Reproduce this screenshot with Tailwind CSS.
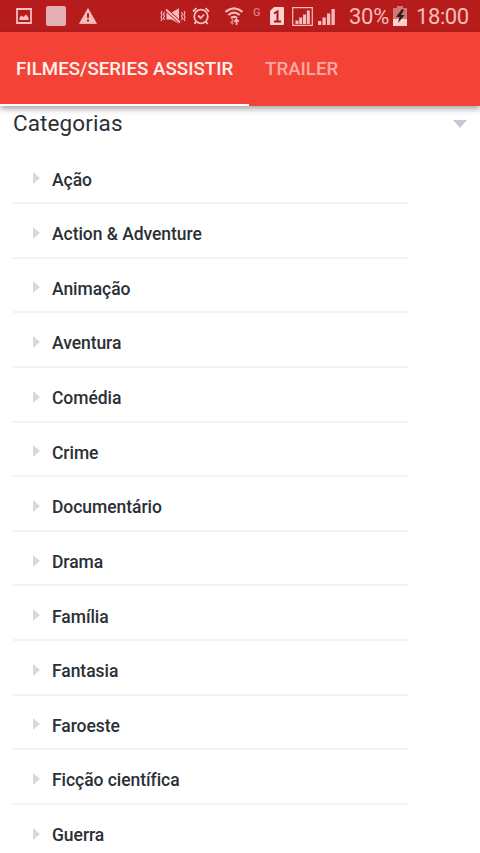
<!DOCTYPE html>
<html lang="pt">
<head>
<meta charset="utf-8">
<title>Categorias</title>
<script src="https://cdn.jsdelivr.net/npm/@tailwindcss/browser@4"></script>
</head>
<body class="bg-white w-[480px] h-[853px] overflow-hidden font-['Roboto',sans-serif] text-[#2b3036]">
<div class="h-[853px] flex flex-col overflow-hidden">
  <div class="h-8 shrink-0 bg-[#b71c1c] flex items-center text-[#f7bcbc] pl-4">
    <svg class="w-4 h-4 shrink-0" viewBox="0 0 16 16"><path d="M1 1h14v14H1z" fill="none" stroke="currentColor" stroke-width="1.8"/><path d="M3.500 12V9.500l2-2 2 1.500 2.500-2.500 2.500 3V12z" fill="currentColor"/></svg>
    <div class="w-5 h-5 rounded-[2px] bg-[#e3afb2] ml-[14px] shrink-0"></div>
    <svg class="w-[18px] h-[16px] ml-[13px] shrink-0" viewBox="0 0 18 16"><path d="M9 .6 17.500 15.500H.5z" fill="currentColor" stroke="currentColor" stroke-linejoin="round" stroke-width=".8"/><path d="M9 5.300v4.700M9 11.500v2" stroke="#b71c1c" stroke-width="2"/></svg>
    <svg class="w-[26px] h-[16px] ml-[63px] shrink-0" viewBox="0 0 26 16" fill="none" stroke="currentColor" stroke-width="1.100"><path d="M2 3 1 5l1 2-1 2 1 2-1 2M4.500 4l-1 2 1 2-1 2 1 2M24 3l1 2-1 2 1 2-1 2 1 2M21.500 4l1 2-1 2 1 2-1 2"/><path d="M6.500 4.500h5L19 .300v15.400L11.500 11.500h-5z" fill="currentColor" stroke="none"/><path d="m6 1.500 14 13" stroke="#b71c1c" stroke-width="3.400"/><path d="m6 1.500 14 13" stroke-width="1.800"/></svg>
    <svg class="w-[18px] h-[18px] ml-[6px] shrink-0" viewBox="0 0 18 18" fill="none" stroke="currentColor" stroke-width="1.800"><circle cx="9" cy="9.500" r="6.800"/><path d="M1 4.500 4.500 1.200M17 4.500l-3.500-3.300M4 14.500 2.500 17M14 14.500l1.500 2.500M6 8.500l2.700 2.600L12 7.500"/></svg>
    <svg class="w-[20px] h-[18px] ml-[14px] shrink-0" viewBox="0 0 20 18" fill="none" stroke="currentColor" stroke-width="2.200"><path d="M1.500 4.800Q10-2 18.500 4.800M4.300 8Q10 3.300 15.700 8M7 11Q10 8.800 13 11"/><path d="M8.500 12v5M6.500 14.500l2 2.300 1-1" stroke-width="1.500" opacity=".6"/><path d="M12.500 18v-5.500M10.200 14.700l2.300-2.300 2.300 2.300" stroke-width="1.700"/></svg>
    <div class="w-[9px] ml-[9px] shrink-0 h-5 text-[11px] leading-[13px] text-[#e07c7c] font-medium">G</div>
    <svg class="w-[14px] h-[18px] ml-[8px] shrink-0" viewBox="0 0 14 18"><path d="M4 0h9q1 0 1 1v16q0 1-1 1H1q-1 0-1-1V4z" fill="#ffd0cd"/><path d="M4 6.500 7.500 4.500V15M4 14.500h7" fill="none" stroke="#a11a1a" stroke-width="2"/></svg>
    <svg class="w-[21px] h-[19px] ml-[8px] shrink-0" viewBox="0 0 21 19"><path d="M.7.700h19.600v17.600H.7z" fill="none" stroke="currentColor" stroke-width="1.200"/><path d="M3.500 13.500h3v3.500h-3zM7.200 10.500h3V17h-3zM11 7.500h3V17h-3zM14.800 3.500h3V17h-3z" fill="currentColor"/></svg>
    <svg class="w-[17px] h-[17px] ml-[5px] shrink-0" viewBox="0 0 17 17"><path d="M0 13h3.300v4H0zM4.500 9.500h3.300V17H4.500zM9 5.500h3.300V17H9zM13.500 1h3.300v16h-3.300z" fill="currentColor"/></svg>
    <div class="w-[40px] ml-[14px] shrink-0 text-[22px] leading-8 pt-[2px] whitespace-nowrap tracking-[-0.3px]">30%</div>
    <svg class="w-[14px] h-[20px] ml-[4px] shrink-0" viewBox="0 0 14 20"><path d="M4 0h6v2h4v18H0V2h4z" fill="#cf7878"/><path d="M0 13h14v7H0z" fill="#ffd0cd"/><path d="M9 3 3 11h3.500L5 17l6.500-8H8l3-5z" fill="#36191a"/></svg>
    <div class="ml-[9px] text-[22px] leading-8 pt-[2px] whitespace-nowrap tracking-[-0.4px]">18:00</div>
  </div>
  <div class="h-[74px] shrink-0 bg-[#f44336] flex text-[18.700px] font-medium shadow-[0_3px_6px_rgba(0,0,0,0.35)] relative">
    <div class="w-[249px] pl-4 border-b-2 border-white text-[#fff0ee] leading-[74px] whitespace-nowrap tracking-[0.03px]">FILMES/SERIES ASSISTIR</div>
    <div class="pl-4 text-[#fba9a2] leading-[74px]">TRAILER</div>
  </div>
  <div class="h-[43px] shrink-0 flex justify-between pl-[13px] pr-[13px]">
    <h1 class="text-[22.500px] leading-[34px] tracking-[0.1px]">Categorias</h1>
    <svg class="w-[14px] h-[8px] mt-[14px]" viewBox="0 0 14 8"><path d="M0 0h14L7 8z" fill="#c5c8d4"/></svg>
  </div>
  <ul id="list" class="ml-[13px] w-[396px] pt-[0.400px] shrink-0 text-[17.500px] tracking-[-0.05px] font-medium"></ul>
</div>
<template id="row">
  <li class="h-[54.640px] border-b-2 border-[#f3f3f4] flex items-center pl-5 pt-[8px]">
    <svg class="w-[7px] h-[12px] mb-[3px] shrink-0" viewBox="0 0 7 12"><path d="M0 0 7 6 0 12z" fill="#d6d9e0"/></svg>
    <span class="ml-[12px] whitespace-nowrap"></span>
  </li>
</template>
<script>
const names = ["Ação","Action & Adventure","Animação","Aventura","Comédia","Crime","Documentário","Drama","Família","Fantasia","Faroeste","Ficção científica","Guerra"];
const list = document.getElementById("list"), row = document.getElementById("row");
for (const name of names) {
  const item = row.content.cloneNode(true);
  item.querySelector("span").textContent = name;
  list.append(item);
}
</script>
</body>
</html>
